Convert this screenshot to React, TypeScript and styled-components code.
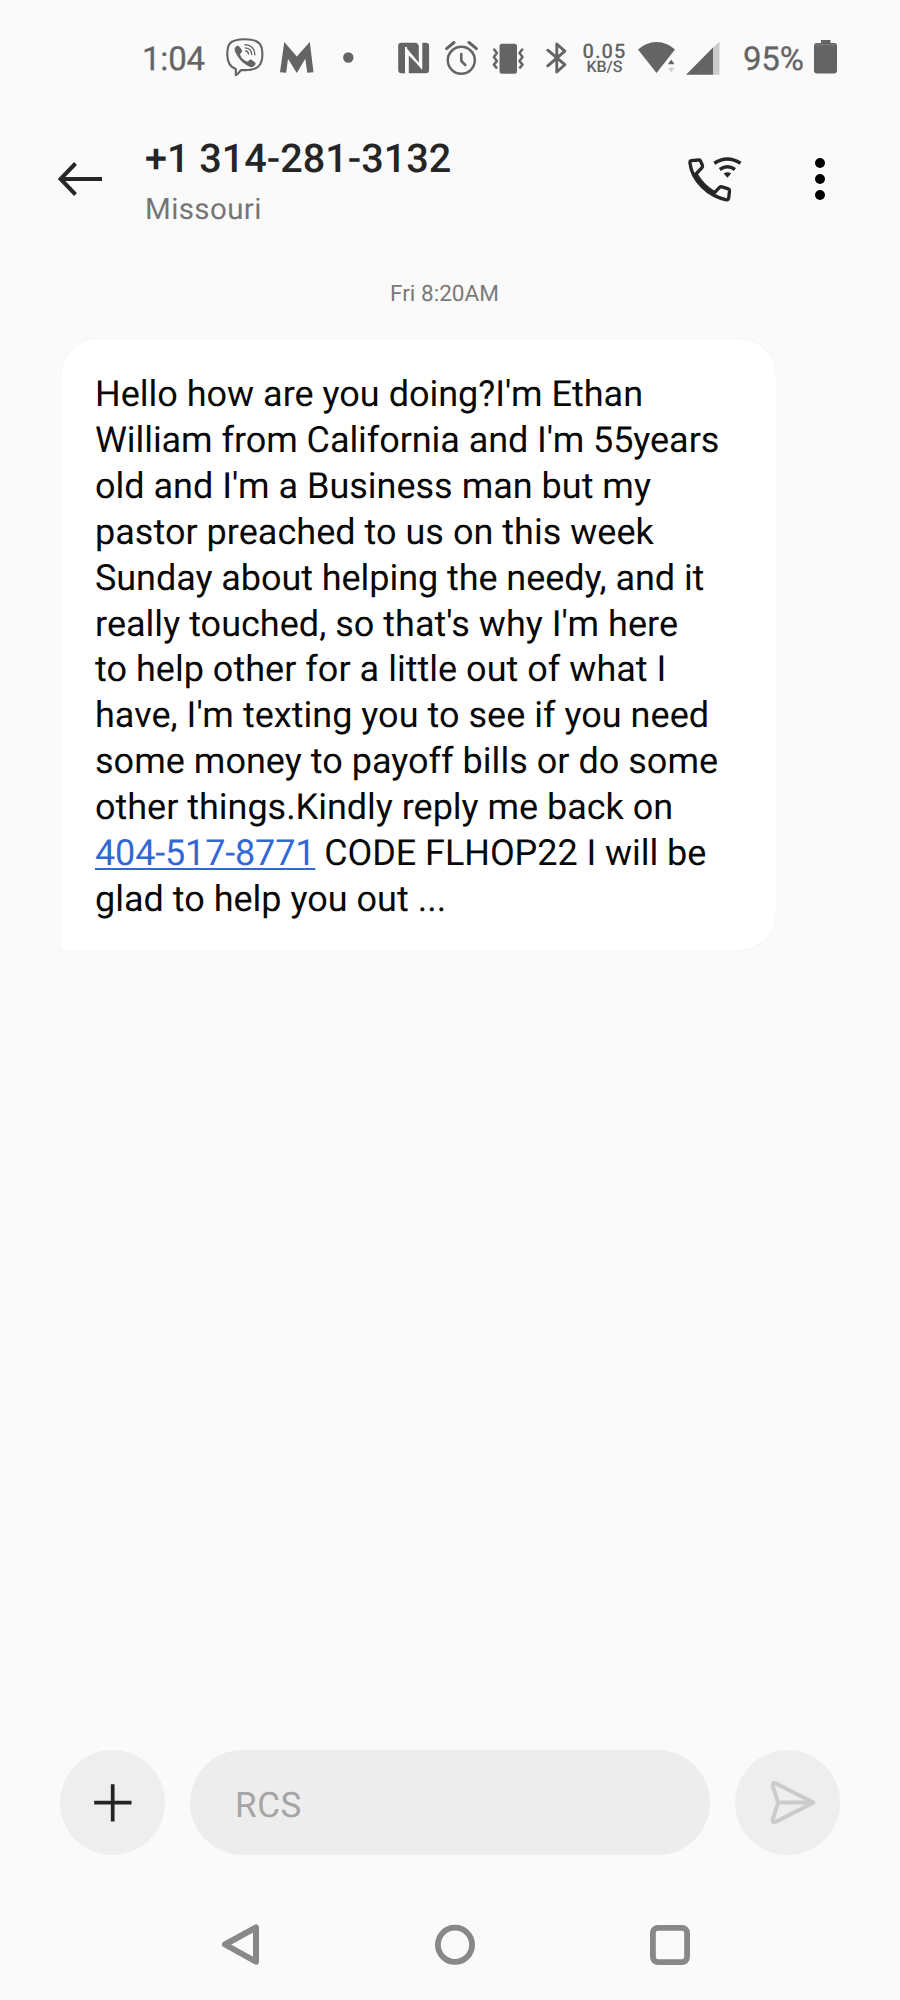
import React from "react";
import styled, { createGlobalStyle } from "styled-components";

const GlobalStyle = createGlobalStyle`
  * { box-sizing: border-box; }
  html, body { margin: 0; padding: 0; background: #fafafa; }
  body { font-family: Roboto, "Liberation Sans", sans-serif; text-rendering: geometricPrecision; }
  svg { display: block; flex: none; }
`;

const Screen = styled.div`
  width: 900px;
  height: 2000px;
  background: #fafafa;
  display: flex;
  flex-direction: column;
  overflow: hidden;
`;

const StatusBar = styled.div`
  height: 114px;
  padding: 36px 0 0 142px;
  display: flex;
  align-items: flex-start;
  color: #646464;
  flex: none;
`;

const Slot = styled.div<{ $width: number; $gap?: number }>`
  width: ${(p) => p.$width}px;
  margin-left: ${(p) => p.$gap ?? 0}px;
  height: 42px;
  flex: none;
`;

const StatusText = styled.span`
  display: block;
  font-size: 33px;
  line-height: 47px;
  letter-spacing: -0.2px;
  -webkit-text-stroke: 0.3px #646464;
  white-space: nowrap;
`;

const Speed = styled.div`
  display: flex;
  flex-direction: column;
  align-items: center;
  font-weight: 500;
  white-space: nowrap;
`;

const SpeedValue = styled.span`
  font-size: 20px;
  line-height: 16px;
  letter-spacing: 1.1px;
  margin-top: 6.5px;
`;

const SpeedUnit = styled.span`
  font-size: 16px;
  line-height: 13px;
  margin-top: 1.2px;
`;

const Header = styled.header`
  height: 130px;
  padding-left: 58px;
  display: flex;
  align-items: flex-start;
  flex: none;
`;

const IconButton = styled.button<{ $gap?: number; $top?: number }>`
  border: 0;
  padding: 0;
  background: none;
  margin-left: ${(p) => p.$gap ?? 0}px;
  margin-top: ${(p) => p.$top ?? 0}px;
  flex: none;
`;

const Contact = styled.div`
  margin-left: 41px;
  width: 545px;
  padding-top: 21px;
`;

const Phone = styled.h1`
  margin: 0;
  font-size: 39.6px;
  line-height: 48px;
  font-weight: 500;
  color: #252525;
  white-space: nowrap;
`;

const Place = styled.div`
  margin-top: 7px;
  font-size: 29.5px;
  line-height: 40px;
  letter-spacing: 0.4px;
  color: #757575;
`;

const Thread = styled.main`
  flex: 1;
  display: flex;
  flex-direction: column;
  align-items: flex-start;
`;

const Stamp = styled.time`
  width: 889px;
  padding-top: 36px;
  height: 94.5px;
  text-align: center;
  font-size: 22.6px;
  line-height: 28px;
  color: #7a7a7a;
`;

const Bubble = styled.div`
  margin-left: 61px;
  width: 715px;
  height: 611px;
  padding: 32.6px 34px 27px;
  background: #fff;
  border-radius: 36px 36px 36px 4px;
  box-shadow: 0 0 1px rgba(0, 0, 0, 0.12);
  font-size: 36px;
  color: #080808;
`;

const Line = styled.div<{ $spacing?: number }>`
  display: flex;
  height: 45.9px;
  line-height: 46px;
  letter-spacing: ${(p) => p.$spacing ?? 0}px;
  white-space: pre;
`;

const Link = styled.a`
  color: #3267d6;
  text-decoration: underline;
  text-decoration-thickness: 2px;
  text-underline-offset: 3px;
  letter-spacing: -0.16px;
`;

const Composer = styled.footer`
  height: 105px;
  padding: 0 60px;
  display: flex;
  gap: 25px;
  flex: none;
`;

const Round = styled.button`
  width: 105px;
  height: 105px;
  padding: 0;
  border: 0;
  border-radius: 50%;
  background: #eee;
  display: grid;
  place-items: center;
  flex: none;
`;

const Field = styled.div`
  flex: 1;
  border-radius: 53px;
  background: #ededed;
  padding-left: 45px;
  line-height: 111px;
  font-size: 35px;
  letter-spacing: 0.6px;
  color: #a5a5a5;
`;

const NavBar = styled.nav`
  height: 145px;
  padding: 66px 210px 0 221px;
  display: flex;
  align-items: flex-start;
  justify-content: space-between;
  flex: none;
`;

const ink = "#646464";
const nav = "#888";

const ViberIcon = () => (
  <svg width="38" height="42" viewBox="0 0 38 42" fill="none" stroke={ink} strokeLinecap="round" strokeLinejoin="round">
    <path d="M19 3.200c-8.500 0-12.600 1.300-15.200 4.300C1.900 9.800 1.300 13 1.300 18.600c0 8 2.300 12.500 8.500 14.300v6.300c2-1.200 3.500-3.200 5.300-5.200 7.800.5 13.600-.4 17-3.200 3.200-2.700 4.300-6.300 4.300-12.200 0-6-1-9.700-4-12C29.500 4.100 25.200 3.200 19 3.200Z" strokeWidth="2.100" />
    <path d="M9.300 11.200c1.500-1.300 2.800-1.900 3.900-.7l2.500 3.300c.9 1.400.3 2.400-.8 3.300-.8.700-.9 1.400-.5 2.300 1.300 2.700 3.200 4.600 6 5.900 1 .4 1.700.2 2.300-.6 1-1.300 2-1.500 3.200-.7l3 2.200c1.200 1 .8 2.200-.3 3.400-1.500 1.700-3 2-4.900 1.100-6.800-3.200-11.400-8.100-14.300-14.500-.8-1.900-1.200-3.700-.1-5Z" fill={ink} stroke="none" />
    <path d="M18.700 8.600c6.300.2 9.900 3.800 10.200 10.200M19.200 11.800c4.200.3 6.300 2.500 6.500 6.700M19.700 15c1.900.2 2.700 1.200 2.800 3" strokeWidth="1.300" />
  </svg>
);

const MIcon = () => (
  <svg width="34" height="42" viewBox="0 0 34 42">
    <path d="M4.300 6 16.800 20.500 29.800 6 33.500 36.300 27.300 36.700 25.300 22.700 16.800 37 8 22.700 6.200 36.700 0 36.300Z" fill={ink} />
  </svg>
);

const NfcIcon = () => (
  <svg width="32" height="42" viewBox="0 0 32 42">
    <path d="M3.500 6.700H18.500L20.800 9.500V27L8.500 14.500V37.300H3.500Q.2 37.300.2 34V10Q.2 6.700 3.500 6.700Z" fill={ink} />
    <path d="M24.300 6.700H27.800Q31.100 6.700 31.100 10V34Q31.100 37.300 27.800 37.300H10.800V19.500L24.300 33Z" fill={ink} />
    <path d="M8 11V37M23 7V31L8 13" fill="none" stroke="#fafafa" strokeWidth="2" />
  </svg>
);

const AlarmIcon = () => (
  <svg width="33" height="42" viewBox="0 0 33 42" fill="none" stroke={ink} strokeWidth="2.500" strokeLinecap="round">
    <circle cx="16.300" cy="24.300" r="13.500" />
    <path d="M16.300 18v7l4 4" />
    <path d="M1.600 12.600 9 6.500M24 6.500l7.400 6.100" strokeWidth="3" />
  </svg>
);

const VibrateIcon = () => (
  <svg width="34" height="42" viewBox="0 0 34 42" fill="none" stroke={ink} strokeWidth="2.500" strokeLinecap="round" strokeLinejoin="round">
    <rect x="7.500" y="7.700" width="17.500" height="30" rx="2.500" fill={ink} stroke="none" />
    <path d="M2.200 13.600l2.700 3.500-3 4 3 4-3 3.500 2.500 3M30.200 13.600l-2.700 3.500 3 4-3 4 3 3.500-2.500 3" />
  </svg>
);

const BluetoothIcon = () => (
  <svg width="22" height="42" viewBox="0 0 22 42" fill="none" stroke={ink} strokeWidth="2.900" strokeLinecap="round" strokeLinejoin="round">
    <path d="M1.800 14.200 18.800 28.700 10.800 36V8l8 7.200L1.800 29.800" />
  </svg>
);

const WifiIcon = () => (
  <svg width="38" height="42" viewBox="0 0 38 42">
    <path d="M0 13.600Q8 6 18.500 6T37 13.600L18.500 37Z" fill={ink} />
    <path d="M30 28.200 33.200 23.500 36.500 28.200Z" fill={ink} />
    <path d="M30 31.800 33.200 36.500 36.500 31.800Z" fill="#cfcfcf" />
  </svg>
);

const SignalIcon = () => (
  <svg width="34" height="42" viewBox="0 0 34 42">
    <path d="M26 12.500 33.500 5.700V38.700H26Z" fill="#cbcbcb" />
    <path d="M0 38.700 27 11.500V38.700Z" fill={ink} />
  </svg>
);

const BatteryIcon = () => (
  <svg width="24" height="42" viewBox="0 0 24 42">
    <path d="M7 4H16.500V7H20Q23 7 23 10V34.500Q23 37.500 20 37.500H3Q0 37.500 0 34.500V10Q0 7 3 7H7Z" fill={ink} />
    <path d="M2.500 10.200Q2.500 8.700 4 8.700H19Q20.500 8.700 20.500 10.200" fill="none" stroke="#858585" strokeWidth=".8" />
  </svg>
);

const BackIcon = () => (
  <svg width="46" height="36" viewBox="0 0 46 36" fill="none" stroke="#262626" strokeWidth="4">
    <path d="M44 18H3M17.500 2.500 2.500 18l15 15.500" />
  </svg>
);

const WifiCallIcon = () => (
  <svg width="56" height="46" viewBox="0 0 56 46" fill="none" stroke="#262626" strokeLinecap="round" strokeLinejoin="round">
    <path d="M3.200 3.700 10.800 3q1.400 0 1.800 1.300L14.300 8q.5 1.500-.3 2.700L8 17Q15 29 26.600 35.600L31.500 30.400q1.200-1 2.500-.5l6.300 1.900q1.300.5 1.200 1.900l-.8 7.400q-.3 1.900-2.200 1.700C20 39 4 23.500 1.900 5.700Q1.700 4 3.200 3.700Z" strokeWidth="3.300" />
    <path d="M26.300 6.200Q39.400-2.200 52.500 6.200M31.800 12.500Q39.400 7 47 12.500" strokeWidth="3.500" strokeLinecap="butt" />
    <path d="M35.700 16.500Q39.400 13.800 43.200 16.500L39.400 20.700Z" fill="#262626" stroke="none" />
  </svg>
);

const MoreIcon = () => (
  <svg width="12" height="44" viewBox="0 0 12 44" fill="#000">
    <circle cx="6" cy="6" r="5" />
    <circle cx="6" cy="22" r="5" />
    <circle cx="6" cy="38" r="5" />
  </svg>
);

const PlusIcon = () => (
  <svg width="38" height="38" viewBox="0 0 38 38" fill="none" stroke="#222423" strokeWidth="3.700">
    <path d="M18.700 .2V37.500M.2 18.700H37.500" />
  </svg>
);

const SendIcon = () => (
  <svg width="105" height="105" viewBox="0 0 105 105" fill="none" stroke="#cbcbcb" strokeWidth="4" strokeLinecap="round" strokeLinejoin="round">
    <path d="M41.200 33.600 78.500 52.500 41.200 71.600Q36.800 73.500 37.800 69L43.200 52.500 37.800 36.200Q37 31.700 41.200 33.600ZM43.200 52.500H77" />
  </svg>
);

const lines = [
  { text: "Hello how are you doing?I'm Ethan" },
  { text: "William from California and I'm 55years", spacing: -0.07 },
  { text: "old and I'm a Business man but my" },
  { text: "pastor preached to us on this week", spacing: 0.02 },
  { text: "Sunday about helping the needy, and it", spacing: -0.06 },
  { text: "really touched, so that's why I'm here", spacing: 0.02 },
  { text: "to help other for a little out of what I", spacing: 0.02 },
  { text: "have, I'm texting you to see if you need", spacing: 0.02 },
  { text: "some money to payoff bills or do some", spacing: 0.02 },
  { text: "other things.Kindly reply me back on", spacing: -0.02 },
];

export default function App() {
  return (
    <>
      <GlobalStyle />
      <Screen>
        <StatusBar>
          <Slot $width={64}><StatusText>1:04</StatusText></Slot>
          <Slot $width={38} $gap={19.5}><ViberIcon /></Slot>
          <Slot $width={34} $gap={16.5}><MIcon /></Slot>
          <Slot $width={10} $gap={29}>
            <svg width="11" height="42" viewBox="0 0 11 42"><circle cx="5.300" cy="21.500" r="5.200" fill={ink} /></svg>
          </Slot>
          <Slot $width={32} $gap={45.3}><NfcIcon /></Slot>
          <Slot $width={33} $gap={14.7}><AlarmIcon /></Slot>
          <Slot $width={34} $gap={14.5}><VibrateIcon /></Slot>
          <Slot $width={22} $gap={19.5}><BluetoothIcon /></Slot>
          <Slot $width={46} $gap={13.5}>
            <Speed>
              <SpeedValue>0.05</SpeedValue>
              <SpeedUnit>KB/S</SpeedUnit>
            </Speed>
          </Slot>
          <Slot $width={38} $gap={10.5}><WifiIcon /></Slot>
          <Slot $width={34} $gap={10.5}><SignalIcon /></Slot>
          <Slot $width={62} $gap={22.5}><StatusText>95%</StatusText></Slot>
          <Slot $width={24} $gap={9}><BatteryIcon /></Slot>
        </StatusBar>

        <Header>
          <IconButton $top={47} aria-label="Back"><BackIcon /></IconButton>
          <Contact>
            <Phone>+1 314-281-3132</Phone>
            <Place>Missouri</Place>
          </Contact>
          <IconButton $gap={-2} $top={42.5} aria-label="Call"><WifiCallIcon /></IconButton>
          <IconButton $gap={70} $top={43} aria-label="More"><MoreIcon /></IconButton>
        </Header>

        <Thread>
          <Stamp>Fri 8:20AM</Stamp>
          <Bubble>
            {lines.map((line) => (
              <Line key={line.text} $spacing={line.spacing}>{line.text}</Line>
            ))}
            <Line $spacing={-0.06}>
              <Link>404-517-8771</Link>
              <span>{" CODE FLHOP22 I will be"}</span>
            </Line>
            <Line>glad to help you out ...</Line>
          </Bubble>
        </Thread>

        <Composer>
          <Round aria-label="Add"><PlusIcon /></Round>
          <Field>RCS</Field>
          <Round aria-label="Send"><SendIcon /></Round>
        </Composer>

        <NavBar>
          <svg width="40" height="48" viewBox="0 0 40 48" fill="none" stroke={nav} strokeWidth="6" strokeLinejoin="round">
            <path d="M4 23.500 35 6.500V40.700Z" />
          </svg>
          <svg width="42" height="48" viewBox="0 0 42 48" fill="none" stroke={nav} strokeWidth="5.800">
            <circle cx="20" cy="23.800" r="17.100" />
          </svg>
          <svg width="40" height="48" viewBox="0 0 40 48" fill="none" stroke={nav} strokeWidth="5.800">
            <rect x="2.900" y="6.900" width="34.200" height="34.200" rx="5" />
          </svg>
        </NavBar>
      </Screen>
    </>
  );
}
